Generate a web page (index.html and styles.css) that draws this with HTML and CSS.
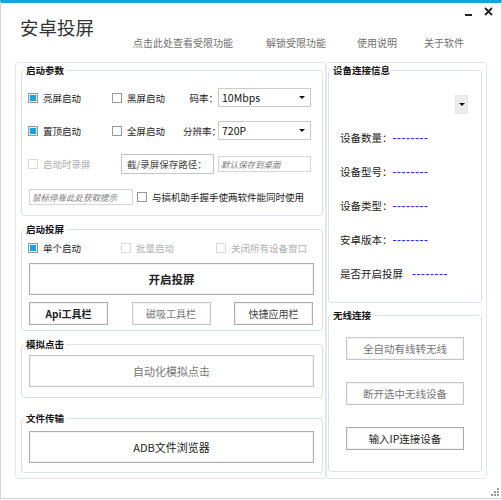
FILE: index.html
```html
<!DOCTYPE html>
<html lang="zh-CN">
<head>
    <meta charset="UTF-8">
    <title>安卓投屏</title>
    <link rel="stylesheet" href="styles.css">
</head>
<body>

<div class="window">
    <div class="header">
        <div class="title">安卓投屏</div>
        <div class="nav">
            <a class="nav-item nav-1">点击此处查看受限功能</a>
            <a class="nav-item nav-2">解锁受限功能</a>
            <a class="nav-item nav-3">使用说明</a>
            <a class="nav-item">关于软件</a>
        </div>
        <svg class="controls" width="32" height="14" viewBox="0 0 32 14">
            <rect x="2" y="8" width="7" height="2" fill="#222"/>
            <path d="M22 2 L29 9 M29 2 L22 9" stroke="#222" stroke-width="1.8"/>
        </svg>
    </div>

    <div class="main">
        <div class="panel panel-left">
            <div class="group g-params">
                <div class="group-title">启动参数</div>
                <div class="row first">
                    <label class="opt w84"><span class="check checked"></span>亮屏启动</label>
                    <label class="opt w71"><span class="check"></span>黑屏启动</label>
                    <span class="field-label">码率：</span>
                    <div class="select">10Mbps<span class="arrow"></span></div>
                </div>
                <div class="row">
                    <label class="opt w84"><span class="check checked"></span>置顶启动</label>
                    <label class="opt w71"><span class="check"></span>全屏启动</label>
                    <span class="field-label">分辨率：</span>
                    <div class="select">720P<span class="arrow"></span></div>
                </div>
                <div class="row">
                    <label class="opt w93 disabled"><span class="check"></span>启动时录屏</label>
                    <div class="path-label">截/录屏保存路径：</div>
                    <input class="text-input w93" type="text" placeholder="默认保存到桌面">
                </div>
                <div class="row">
                    <input class="text-input hint" type="text" placeholder="鼠标停靠此处获取提示">
                    <label class="opt"><span class="check"></span>与搞机助手握手使两软件能同时使用</label>
                </div>
            </div>

            <div class="group g-launch">
                <div class="group-title">启动投屏</div>
                <div class="launch-row">
                    <label class="opt w93"><span class="check checked"></span>单个启动</label>
                    <label class="opt w95 disabled"><span class="check"></span>批量启动</label>
                    <label class="opt disabled"><span class="check"></span>关闭所有设备窗口</label>
                </div>
                <button class="btn btn-main strong">开启投屏</button>
                <div class="btn-row">
                    <button class="btn btn-sm strong">Api工具栏</button>
                    <button class="btn btn-sm muted">磁吸工具栏</button>
                    <button class="btn btn-sm dim">快捷应用栏</button>
                </div>
            </div>

            <div class="group g-click">
                <div class="group-title">模拟点击</div>
                <button class="btn btn-main muted">自动化模拟点击</button>
            </div>

            <div class="group g-file">
                <div class="group-title">文件传输</div>
                <button class="btn btn-main">ADB文件浏览器</button>
            </div>
        </div>

        <div class="panel panel-right">
            <div class="group g-info">
                <div class="group-title">设备连接信息</div>
                <div class="mini-select"><span class="arrow"></span></div>
                <div class="info-row first">设备数量：<span class="dash">--------</span></div>
                <div class="info-row">设备型号：<span class="dash">--------</span></div>
                <div class="info-row">设备类型：<span class="dash">--------</span></div>
                <div class="info-row">安卓版本：<span class="dash">--------</span></div>
                <div class="info-row">是否开启投屏<span class="dash gap">--------</span></div>
            </div>

            <div class="group g-wifi">
                <div class="group-title">无线连接</div>
                <button class="btn btn-wifi muted">全自动有线转无线</button>
                <button class="btn btn-wifi muted">断开选中无线设备</button>
                <button class="btn btn-wifi">输入IP连接设备</button>
            </div>
        </div>
    </div>

    <svg class="grip" width="8" height="8" viewBox="0 0 8 8">
        <rect x="6" y="0" width="2" height="2" fill="#9a9a9a"/>
        <rect x="3" y="3" width="2" height="2" fill="#9a9a9a"/>
        <rect x="6" y="3" width="2" height="2" fill="#9a9a9a"/>
        <rect x="0" y="6" width="2" height="2" fill="#9a9a9a"/>
        <rect x="3" y="6" width="2" height="2" fill="#9a9a9a"/>
        <rect x="6" y="6" width="2" height="2" fill="#9a9a9a"/>
    </svg>
</div>

</body>
</html>
```

FILE: styles.css
```css
* {
    box-sizing: border-box;
}
body {
    margin: 0;
    font-family: "Noto Sans CJK SC", "Liberation Sans", sans-serif;
    font-size: 9.5px;
    color: #222;
    background: #fff;
}
.window {
    position: relative;
    width: 502px;
    height: 499px;
    border-top: 3px solid #11a5dc;
    border-left: 1px solid #d6d6d6;
    border-right: 1px solid #d6d6d6;
    border-bottom: 1px solid #d0d0d0;
    background: #fff;
}

/* header */
.header {
    position: relative;
    display: flex;
    height: 59px;
    padding-left: 19px;
}
.title {
    width: 113px;
    padding-top: 12px;
    font-size: 18.5px;
    line-height: 24px;
    color: #333;
}
.nav {
    display: flex;
    padding-top: 33px;
    font-size: 10px;
    line-height: 14px;
    color: #707070;
}
.nav-1 { width: 133px; }
.nav-2 { width: 91px; }
.nav-3 { width: 67px; }
.controls {
    position: absolute;
    left: 462px;
    top: 3px;
}
.grip {
    position: absolute;
    right: 2px;
    bottom: 2px;
}

/* panels & groups */
.main {
    display: flex;
    padding-left: 14px;
}
.panel {
    display: flex;
    flex-direction: column;
    height: 417px;
    border: 1px solid #e3e7eb;
    border-radius: 3px;
}
.panel-left {
    width: 311px;
    padding: 7px 2px 0 5px;
}
.panel-right {
    width: 161px;
    padding: 7px 4px 0 1px;
}
.group {
    display: flex;
    flex-direction: column;
    border: 1px solid #dbe1e8;
    border-radius: 3px;
}
.group-title {
    width: max-content;
    margin: -8px 0 0 2px;
    padding: 0 2px;
    background: #fff;
    font-weight: bold;
    line-height: 14px;
    color: #111;
}
.g-params { height: 146px; }
.g-launch { height: 102px; margin-top: 13px; }
.g-click { height: 54px; margin-top: 13px; }
.g-file { height: 55px; margin-top: 20px; }
.g-info { height: 233px; }
.g-wifi { height: 157px; margin-top: 12px; }

/* options */
.row {
    display: flex;
    align-items: center;
    height: 33px;
    padding-left: 6px;
}
.row.first {
    margin-top: 4px;
}
.opt {
    display: flex;
    align-items: center;
    line-height: 14px;
    white-space: nowrap;
}
.w84 { width: 84px; }
.w71 { width: 71px; }
.w93 { width: 93px; }
.w95 { width: 95px; }
.check {
    flex: none;
    width: 10px;
    height: 10px;
    margin-right: 5px;
    border: 1px solid #9a9a9a;
    background: #fff;
}
.check.checked {
    background: #17a3dd;
    box-shadow: inset 0 0 0 1px #d9eef7;
}
.opt.disabled {
    color: #b0b0b0;
}
.opt.disabled .check {
    border-color: #dadada;
}
.field-label {
    width: 35px;
    text-align: right;
    white-space: nowrap;
}
.select {
    display: flex;
    align-items: center;
    width: 93px;
    height: 19px;
    padding: 0 5px 0 3px;
    border: 1px solid #cbcbcb;
    font-size: 10.5px;
    color: #111;
}
.arrow {
    width: 0;
    height: 0;
    margin-left: auto;
    border-left: 3px solid transparent;
    border-right: 3px solid transparent;
    border-top: 3px solid #111;
}
.path-label {
    width: 93px;
    height: 20px;
    margin-right: 4px;
    padding-left: 5px;
    border: 1px solid #c4c4c4;
    line-height: 18px;
    color: #444;
}
.text-input {
    height: 16px;
    padding: 0 2px;
    border: 1px solid #d5d5d5;
    font-family: inherit;
    font-size: 8.5px;
    outline: none;
}
.text-input::placeholder {
    font-style: italic;
    color: #7a7a7a;
}
.text-input.hint {
    width: 104px;
    margin: 0 4px 0 1px;
}

/* launch group */
.launch-row {
    display: flex;
    align-items: center;
    height: 16px;
    margin-top: 4px;
    padding-left: 6px;
}
.btn {
    display: block;
    padding: 0;
    border: 1px solid #adadad;
    background: #fff;
    box-shadow: inset 0 0 0 1px #f2f2f2;
    font-family: inherit;
    font-size: 11px;
    color: #222;
    cursor: pointer;
}
.btn.strong {
    font-weight: bold;
}
.btn.muted {
    border-color: #c8c8c8;
    color: #777;
}
.btn.dim {
    color: #444;
}
.btn-main {
    width: 285px;
    height: 32px;
    margin: 7px 0 0 7px;
}
.g-launch .btn-main {
    font-size: 11.5px;
}
.g-click .btn-main {
    margin-top: 4px;
}
.g-file .btn-main {
    margin-top: 6px;
}
.btn-row {
    display: flex;
    justify-content: space-between;
    width: 284px;
    margin: 7px 0 0 7px;
}
.btn-sm {
    width: 79px;
    height: 23px;
    font-size: 10px;
}

/* device info */
.mini-select {
    display: flex;
    align-items: center;
    justify-content: center;
    align-self: flex-end;
    width: 13px;
    height: 19px;
    margin: 18px 13px 0 0;
    border: 1px solid #e6e6e6;
    background: #ececec;
}
.mini-select .arrow {
    margin: 0;
}
.info-row {
    display: flex;
    align-items: center;
    height: 34px;
    padding-left: 11px;
    font-size: 10.5px;
    color: #222;
}
.info-row.first {
    margin-top: 6px;
}
.dash {
    font-weight: bold;
    color: #2b2bff;
    letter-spacing: 0.6px;
}
.dash.gap {
    margin-left: 9px;
}

/* wireless */
.btn-wifi {
    align-self: center;
    width: 118px;
    height: 23px;
    margin-top: 22px;
    font-size: 10.5px;
}
.g-wifi .group-title + .btn-wifi {
    margin-top: 15px;
}
```
